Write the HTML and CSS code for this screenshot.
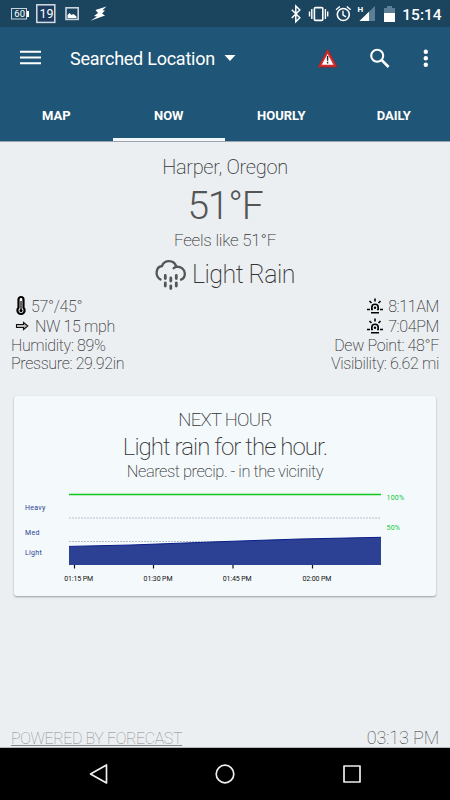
FILE: index.html
```html
<!DOCTYPE html>
<html lang="en">
<head>
    <meta charset="UTF-8">
    <meta name="viewport" content="width=device-width, initial-scale=1.0">
    <title>Weather</title>
    <link rel="stylesheet" href="styles.css">
</head>
<body>
    <div class="screen">
        <div class="status-bar">
            <svg class="status-icons" width="120" height="27" viewBox="0 0 120 27">
                <rect x="11.5" y="8.5" width="15" height="10.5" fill="none" stroke="#c9d4dc"/>
                <rect x="27" y="11" width="2" height="6" fill="#fff"/>
                <text x="14.3" y="17.3" class="battery-num">60</text>
                <rect x="36.8" y="4.8" width="18" height="17.6" fill="#1d3c60" stroke="#d5dde3" stroke-width="1.5"/>
                <text x="39.4" y="18.2" class="day-num">19</text>
                <rect x="66" y="7.8" width="12.2" height="11.6" fill="none" stroke="#c9d4dc" stroke-width="1.6"/>
                <path d="M67.5 18v-3l2-2 2 2 2-1 3 2.500v1.500z" fill="#fff"/>
                <path d="M106.500 6.500L95.500 10L98 13L94 16L97 16.500L90.500 20.800L105 15.500L102 13.500L105 10.500L102.500 10.300z" fill="#fff"/>
            </svg>
            <svg class="status-icons" width="165" height="27" viewBox="285 0 165 27">
                <path d="M291.800 9.800l8 8-4 4V6l4 4-8 8" fill="none" stroke="#fff" stroke-width="1.5"/>
                <rect x="314.400" y="7.600" width="8.400" height="12.800" rx="1" fill="none" stroke="#fff" stroke-width="1.600"/>
                <path d="M311.800 9v10M309.500 11.500v5M325.400 9v10M327.700 11.500v5" stroke="#fff" stroke-width="1.400"/>
                <circle cx="343.300" cy="14.500" r="6" fill="none" stroke="#fff" stroke-width="1.600"/>
                <path d="M343 10.800v4.200l3 1.800M336 9.700l3.800-3.200M350.600 9.700l-3.800-3.200" fill="none" stroke="#fff" stroke-width="1.400"/>
                <text x="357.500" y="12" class="net">H</text>
                <path d="M359.500 21L375 6v15z" fill="#5c7f95"/>
                <path d="M359.500 21L369 11.700V21z" fill="#fff"/>
                <path d="M384 8h3V6h5v2h3v5h-11z" fill="#5c7f95"/>
                <path d="M384 13h11v9h-11z" fill="#fff"/>
                <text x="402.300" y="20" class="clock">15:14</text>
            </svg>
        </div>
        <div class="toolbar">
            <svg class="menu" width="22" height="16" viewBox="0 0 22 16">
                <path d="M0 1.800h21M0 7.500h21M0 13.200h21" stroke="#fff" stroke-width="1.900"/>
            </svg>
            <span class="title">Searched Location</span>
            <svg class="caret" width="12" height="6" viewBox="0 0 12 6"><path d="M.5 0h11L6 6z" fill="#fff"/></svg>
            <svg class="actions" width="130" height="62" viewBox="320 27 130 62">
                <path d="M327.600 49.500L337.200 67h-19z" fill="#d32f2f" stroke="#b22024" stroke-width=".8" stroke-linejoin="round"/>
                <path d="M327.600 54l5.800 10.800h-11.600z" fill="#fff"/>
                <path d="M327.600 56v4.800M327.600 61.800v1.700" stroke="#222" stroke-width="1.400"/>
                <circle cx="377.200" cy="55.700" r="6" fill="none" stroke="#fff" stroke-width="2.100"/>
                <path d="M381.600 60l7 7" stroke="#fff" stroke-width="2.600"/>
                <g fill="#fff"><circle cx="425.800" cy="51.800" r="2.200"/><circle cx="425.800" cy="58.300" r="2.200"/><circle cx="425.800" cy="64.800" r="2.200"/></g>
            </svg>
        </div>
        <div class="tabs">
            <div class="tab">MAP</div>
            <div class="tab active">NOW</div>
            <div class="tab">HOURLY</div>
            <div class="tab">DAILY</div>
        </div>

        <div class="content">
            <div class="current">
                <div class="place">Harper, Oregon</div>
                <div class="temp">51°F</div>
                <div class="feels">Feels like 51°F</div>
                <div class="summary">
                    <svg width="32" height="32" viewBox="0 0 32 32" fill="none" stroke="#555" stroke-width="2.300" stroke-linecap="round">
                        <path d="M5.500 20.500C2.500 18.700 1.300 16 1.700 13C2 9.500 4.400 7.300 7 7C8.200 3.800 10.700 2.200 14 2.200C17.700 2.200 20.300 4.400 21.200 7.800C26 7.300 29.600 10.200 29.800 14.200C30 17.500 28.400 19.800 26 20.700M18.600 9.300C19.400 8.500 20.200 8 21.200 7.800"/>
                        <path d="M10.300 16.500v3M15.800 19v3M21.300 16.500v3M10.300 24v3M15.800 27v2.500M21.300 24v3" stroke-width="2.800"/>
                    </svg>
                    <span>Light Rain</span>
                </div>
            </div>

            <div class="details">
                <div class="column">
                    <div class="row">
                        <svg class="thermo" width="12" height="22" viewBox="0 0 12 22">
                            <path d="M3.500 4.500a2.500 2.500 0 0 1 5 0v8.300a3.600 3.600 0 1 1-5 0z" fill="#fff" stroke="#000" stroke-width="2.200"/>
                            <path d="M6 6v9" stroke="#000" stroke-width="1.200"/><circle cx="6" cy="15.600" r="1.600" fill="#000"/>
                        </svg>
                        <span>57°/45°</span>
                    </div>
                    <div class="row">
                        <svg class="arrow" width="14" height="10" viewBox="0 0 14 10"><path d="M1.500 3.500h7V1.500L12.800 5L8.500 8.500V6.500h-7z" fill="#bbb" stroke="#111" stroke-width="1.100"/></svg>
                        <span>NW 15 mph</span>
                    </div>
                    <div class="row">Humidity: 89%</div>
                    <div class="row">Pressure: 29.92in</div>
                </div>
                <div class="column right">
                    <div class="row">
                        <svg class="sun" width="16" height="16" viewBox="0 0 16 16" fill="none" stroke="#000" stroke-width="1.600">
                            <path d="M4.800 11.500V9.500a3.200 3.200 0 0 1 6.400 0v2M0 11.500h3M4 11.500h2M10 11.500h2M13 11.500h3M4 14.800h8M8 .5v3M2.500 3l2 2M13.500 3l-2 2"/><circle cx="8" cy="9.800" r="1.200" fill="#000" stroke="none"/>
                        </svg>
                        <span>8:11AM</span>
                    </div>
                    <div class="row">
                        <svg class="sun" width="16" height="16" viewBox="0 0 16 16" fill="none" stroke="#000" stroke-width="1.600">
                            <path d="M4.800 11.500V9.500a3.200 3.200 0 0 1 6.400 0v2M0 11.500h3M4 11.500h2M10 11.500h2M13 11.500h3M4 14.800h8M8 .5v3M2.500 3l2 2M13.500 3l-2 2"/><circle cx="8" cy="9.800" r="1.200" fill="#000" stroke="none"/>
                        </svg>
                        <span>7:04PM</span>
                    </div>
                    <div class="row">Dew Point: 48°F</div>
                    <div class="row">Visibility: 6.62 mi</div>
                </div>
            </div>

            <div class="card">
                <div class="card-title">NEXT HOUR</div>
                <div class="card-summary">Light rain for the hour.</div>
                <div class="card-nearest">Nearest precip. - in the vicinity</div>
                <svg class="chart" width="422" height="110" viewBox="14 486 422 110">
                    <path d="M69 494.500h312" stroke="#0fc81e" stroke-width="1.400"/>
                    <path d="M69 518h312M69 541.500h312" stroke="#b4bfcd" stroke-width="1" stroke-dasharray="2 1"/>
                    <path d="M69 546.400L131 545L225 541.500L300 539L381 537.300V565H69z" fill="#2c4193"/>
                    <path d="M69 546.400L131 545L225 541.500L300 539L381 537.300" fill="none" stroke="#0b1e86" stroke-width="1"/>
                    <path d="M74.500 565v3.500M153.500 565v3.500M233 565v3.500M312.500 565v3.500" stroke="#111" stroke-width="1.200"/>
                    <g class="level">
                        <text x="25" y="510">Heavy</text>
                        <text x="25" y="535">Med</text>
                        <text x="25" y="555">Light</text>
                    </g>
                    <g class="percent">
                        <text x="386.500" y="500">100%</text>
                        <text x="386.500" y="530">50%</text>
                    </g>
                    <g class="time">
                        <text x="78.700" y="580.500">01:15 PM</text>
                        <text x="158" y="580.500">01:30 PM</text>
                        <text x="237.200" y="580.500">01:45 PM</text>
                        <text x="316.900" y="580.500">02:00 PM</text>
                    </g>
                </svg>
            </div>

            <div class="footer">
                <a class="credit">POWERED BY FORECAST</a>
                <span class="updated">03:13 PM</span>
            </div>
        </div>

        <div class="nav-bar">
            <svg width="450" height="52" viewBox="0 748 450 52" fill="none" stroke="#eee" stroke-width="1.700" stroke-linejoin="round">
                <path d="M106.500 765v18L90.500 774z"/>
                <circle cx="225" cy="774" r="8.800"/>
                <rect x="344" y="766" width="16" height="16"/>
            </svg>
        </div>
    </div>
</body>
</html>
```

FILE: styles.css
```css
* {
    box-sizing: border-box;
}
body {
    margin: 0;
    font-family: Roboto, sans-serif;
    background-color: #ebeff2;
}
svg {
    display: block;
    flex-shrink: 0;
}
.screen {
    width: 450px;
    height: 800px;
    display: flex;
    flex-direction: column;
    overflow: hidden;
}
.status-bar {
    height: 27px;
    background-color: #1b445f;
    display: flex;
    justify-content: space-between;
}
.status-icons text {
    fill: #fff;
}
.battery-num {
    font-size: 9.500px;
}
.day-num {
    font-size: 12.500px;
}
.net {
    font-size: 8px;
    font-weight: 700;
}
.clock {
    font-size: 15.500px;
    font-weight: 500;
}
.toolbar {
    height: 62px;
    background-color: #1f5576;
    display: flex;
    align-items: center;
    padding-left: 20px;
}
.title {
    color: #fff;
    font-size: 18px;
    letter-spacing: -0.25px;
    margin-left: 28px;
    margin-top: 1px;
}
.caret {
    margin-left: 9px;
}
.actions {
    margin-left: auto;
    overflow: visible;
}
.tabs {
    height: 53px;
    background-color: #1f5576;
    display: flex;
    border-bottom: 1px solid #9aa5ad;
}
.tab {
    flex: 1;
    color: #fff;
    font-size: 13px;
    font-weight: 700;
    text-align: center;
    line-height: 54px;
    height: 52px;
}
.tab.active {
    border-bottom: 3px solid #f4f7fa;
}
.content {
    flex: 1;
    display: flex;
    flex-direction: column;
    color: #333;
    font-weight: 200;
    border-bottom: 1px solid #b5b8ba;
}
.current {
    height: 151px;
    padding-top: 11px;
    text-align: center;
    white-space: nowrap;
}
.place {
    font-size: 20px;
    letter-spacing: -0.3px;
    line-height: 28px;
}
.temp {
    font-size: 39px;
    font-weight: 300;
    color: #555;
    letter-spacing: -1.2px;
    line-height: 46px;
    margin-top: 2px;
}
.feels {
    font-size: 17px;
    letter-spacing: -0.25px;
    line-height: 22px;
}
.summary {
    display: flex;
    justify-content: center;
    align-items: center;
    gap: 5px;
    font-size: 25px;
    letter-spacing: -0.55px;
    line-height: 32px;
    margin-top: 8px;
}
.details {
    display: flex;
    justify-content: space-between;
    height: 103px;
    padding: 3px 11px 0;
    font-size: 16px;
    letter-spacing: -0.35px;
    white-space: nowrap;
}
.row {
    display: flex;
    align-items: center;
    height: 18px;
}
.row:nth-child(-n+2) {
    height: 20px;
}
.right .row {
    justify-content: flex-end;
}
.thermo {
    margin: 0 4px 0 4px;
}
.arrow {
    margin: 0 6px 0 4px;
}
.sun {
    margin-right: 5px;
}
.card {
    height: 200px;
    margin: 0 14px;
    padding-top: 12px;
    background-color: #f4f9fc;
    border-radius: 3px;
    box-shadow: 0 1px 2px rgba(0, 0, 0, 0.35);
    text-align: center;
    white-space: nowrap;
    color: #333;
}
.card-title {
    font-size: 18.500px;
    letter-spacing: -0.7px;
    line-height: 24px;
}
.card-summary {
    font-size: 24px;
    letter-spacing: -0.95px;
    line-height: 30px;
}
.card-nearest {
    font-size: 16.500px;
    letter-spacing: -0.5px;
    line-height: 20px;
    margin-bottom: 4px;
}
.chart text {
    font-size: 7px;
    font-weight: 400;
}
.chart .level {
    fill: #2c4193;
    letter-spacing: 0.3px;
}
.percent {
    fill: #0fc83a;
    letter-spacing: 0.2px;
}
.time {
    fill: #111;
    text-anchor: middle;
    letter-spacing: -0.1px;
}
.footer {
    margin-top: auto;
    padding: 0 11px;
    display: flex;
    justify-content: space-between;
    align-items: flex-end;
    font-weight: 100;
    font-size: 18px;
    line-height: 19px;
}
.updated {
    letter-spacing: -0.1px;
}
.credit {
    font-size: 16px;
    letter-spacing: -0.4px;
    margin-bottom: -1px;
    color: #888;
    text-decoration: underline;
}
.nav-bar {
    height: 52px;
    background-color: #000;
}
```
